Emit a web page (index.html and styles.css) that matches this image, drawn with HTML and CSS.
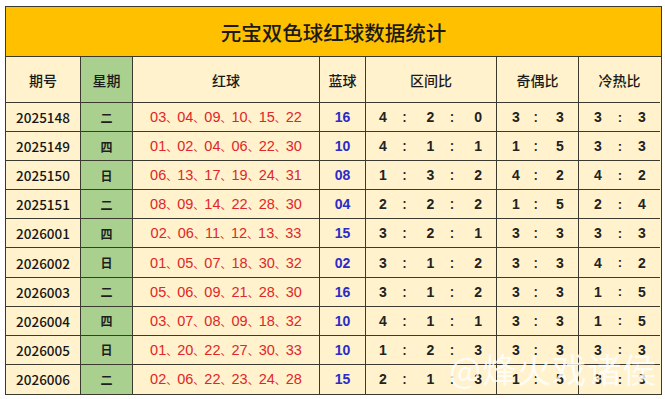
FILE: index.html
```html
<!DOCTYPE html>
<html lang="zh">
<head>
<meta charset="utf-8">
<link rel="stylesheet" href="styles.css">
</head>
<body>
<div class="sheet">
  <div class="title">元宝双色球红球数据统计</div>
  <div class="grid">
    <div class="c hd">期号</div>
    <div class="c hd wk">星期</div>
    <div class="c hd">红球</div>
    <div class="c hd">蓝球</div>
    <div class="c hd">区间比</div>
    <div class="c hd">奇偶比</div>
    <div class="c hd last">冷热比</div>

    <div class="c no">2025148</div><div class="c wk d">二</div><div class="c red">03<b>、</b>04<b>、</b>09<b>、</b>10<b>、</b>15<b>、</b>22</div><div class="c blue">16</div><div class="c r3"><span>4</span><i>：</i><span>2</span><i>：</i><span>0</span></div><div class="c r2"><span>3</span><i>：</i><span>3</span></div><div class="c r2 hc last"><span>3</span><i>:</i><span>3</span></div>
    <div class="c no">2025149</div><div class="c wk d">四</div><div class="c red">01<b>、</b>02<b>、</b>04<b>、</b>06<b>、</b>22<b>、</b>30</div><div class="c blue">10</div><div class="c r3"><span>4</span><i>：</i><span>1</span><i>：</i><span>1</span></div><div class="c r2"><span>1</span><i>：</i><span>5</span></div><div class="c r2 hc last"><span>3</span><i>:</i><span>3</span></div>
    <div class="c no">2025150</div><div class="c wk d">日</div><div class="c red">06<b>、</b>13<b>、</b>17<b>、</b>19<b>、</b>24<b>、</b>31</div><div class="c blue">08</div><div class="c r3"><span>1</span><i>：</i><span>3</span><i>：</i><span>2</span></div><div class="c r2"><span>4</span><i>：</i><span>2</span></div><div class="c r2 hc last"><span>4</span><i>:</i><span>2</span></div>
    <div class="c no">2025151</div><div class="c wk d">二</div><div class="c red">08<b>、</b>09<b>、</b>14<b>、</b>22<b>、</b>28<b>、</b>30</div><div class="c blue">04</div><div class="c r3"><span>2</span><i>：</i><span>2</span><i>：</i><span>2</span></div><div class="c r2"><span>1</span><i>：</i><span>5</span></div><div class="c r2 hc last"><span>2</span><i>:</i><span>4</span></div>
    <div class="c no">2026001</div><div class="c wk d">四</div><div class="c red">02<b>、</b>06<b>、</b>11<b>、</b>12<b>、</b>13<b>、</b>33</div><div class="c blue">15</div><div class="c r3"><span>3</span><i>：</i><span>2</span><i>：</i><span>1</span></div><div class="c r2"><span>3</span><i>：</i><span>3</span></div><div class="c r2 hc last"><span>3</span><i>:</i><span>3</span></div>
    <div class="c no">2026002</div><div class="c wk d">日</div><div class="c red">01<b>、</b>05<b>、</b>07<b>、</b>18<b>、</b>30<b>、</b>32</div><div class="c blue">02</div><div class="c r3"><span>3</span><i>：</i><span>1</span><i>：</i><span>2</span></div><div class="c r2"><span>3</span><i>：</i><span>3</span></div><div class="c r2 hc last"><span>4</span><i>:</i><span>2</span></div>
    <div class="c no">2026003</div><div class="c wk d">二</div><div class="c red">05<b>、</b>06<b>、</b>09<b>、</b>21<b>、</b>28<b>、</b>30</div><div class="c blue">16</div><div class="c r3"><span>3</span><i>：</i><span>1</span><i>：</i><span>2</span></div><div class="c r2"><span>3</span><i>：</i><span>3</span></div><div class="c r2 hc last"><span>1</span><i>:</i><span>5</span></div>
    <div class="c no">2026004</div><div class="c wk d">四</div><div class="c red">03<b>、</b>07<b>、</b>08<b>、</b>09<b>、</b>18<b>、</b>32</div><div class="c blue">10</div><div class="c r3"><span>4</span><i>：</i><span>1</span><i>：</i><span>1</span></div><div class="c r2"><span>3</span><i>：</i><span>3</span></div><div class="c r2 hc last"><span>1</span><i>:</i><span>5</span></div>
    <div class="c no">2026005</div><div class="c wk d">日</div><div class="c red">01<b>、</b>20<b>、</b>22<b>、</b>27<b>、</b>30<b>、</b>33</div><div class="c blue">10</div><div class="c r3"><span>1</span><i>：</i><span>2</span><i>：</i><span>3</span></div><div class="c r2"><span>3</span><i>：</i><span>3</span></div><div class="c r2 hc last"><span>3</span><i>:</i><span>3</span></div>
    <div class="c no bt">2026006</div><div class="c wk d bt">二</div><div class="c red bt">02<b>、</b>06<b>、</b>22<b>、</b>23<b>、</b>24<b>、</b>28</div><div class="c blue bt">15</div><div class="c r3 bt"><span>2</span><i>：</i><span>1</span><i>：</i><span>3</span></div><div class="c r2 bt"><span>1</span><i>：</i><span>5</span></div><div class="c r2 hc last bt"><span>3</span><i>:</i><span>3</span></div>
  </div>
  <div class="mark">@烽火戏诸侯</div>
</div>
</body>
</html>
```

FILE: styles.css
```css
html, body {
  margin: 0;
  padding: 0;
  background: #ffffff;
}
body {
  font-family: "Liberation Sans", "Noto Sans CJK SC", sans-serif;
  color: #1e1e1e;
}
.sheet {
  position: relative;
  margin: 6px 0 0 5px;
  width: 657px;
  border: 1.5px solid #3a3a2e;
  box-sizing: border-box;
  overflow: hidden;
}
.title {
  height: 49px;
  background: #ffc000;
  border-bottom: 1px solid #3a3a2e;
  display: flex;
  align-items: center;
  justify-content: center;
  font-family: "Noto Sans CJK SC", sans-serif;
  font-size: 20.5px;
  font-weight: 500;
  color: #1a1a1a;
}
.grid {
  display: grid;
  grid-template-columns: 75px 52px 187px 46px 131px 82px 81px;
  grid-template-rows: 46px repeat(10, 29.1px);
  background: #fff2cc;
}
.c {
  display: flex;
  align-items: center;
  justify-content: center;
  border-right: 1px solid #3a3a2e;
  border-bottom: 1px solid #3a3a2e;
  font-size: 13px;
  white-space: nowrap;
}
.c.last { border-right: none; }
.c.bt { border-bottom: none; }
.hd {
  font-family: "Noto Sans CJK SC", sans-serif;
  font-size: 14px;
  font-weight: 500;
  color: #1a1a1a;
}
.wk { background: #a9d08e; }
.d {
  font-family: "Noto Sans CJK SC", sans-serif;
  font-weight: 700;
  font-size: 12px;
}
.no {
  font-family: "Noto Sans CJK SC", sans-serif;
  font-size: 13.5px;
  font-weight: 500;
  color: #161616;
}
.red {
  color: #e0262a;
  font-size: 14.5px;
  font-family: "Liberation Sans", "Noto Sans CJK SC", sans-serif;
}
.red b {
  font-weight: 400;
  font-family: "Noto Sans CJK SC", sans-serif;
  font-size: 11px;
}
.blue {
  color: #2b2bc8;
  font-weight: 700;
  font-size: 14px;
}
.r3, .r2 {
  justify-content: space-between;
  font-weight: 700;
  font-size: 14px;
  color: #222;
}
.r3 { padding: 0 14px 0 13px; }
.r2 { padding: 0 13px 0 14px; }
.r3 i, .r2 i {
  font-style: normal;
  font-family: "Noto Sans CJK SC", sans-serif;
  font-weight: 700;
  font-size: 11px;
  width: 10px;
  text-align: center;
}
.r2 span { width: 10px; text-align: center; }
.r2.hc i { font-family: "Liberation Sans", sans-serif; font-size: 13px; }
.mark {
  position: absolute;
  left: 443px;
  top: 342px;
  font-family: "Noto Sans CJK SC", sans-serif;
  font-size: 34px;
  line-height: 40px;
  color: rgba(255, 255, 255, 0.82);
  letter-spacing: 1px;
  white-space: nowrap;
  pointer-events: none;
}
```
